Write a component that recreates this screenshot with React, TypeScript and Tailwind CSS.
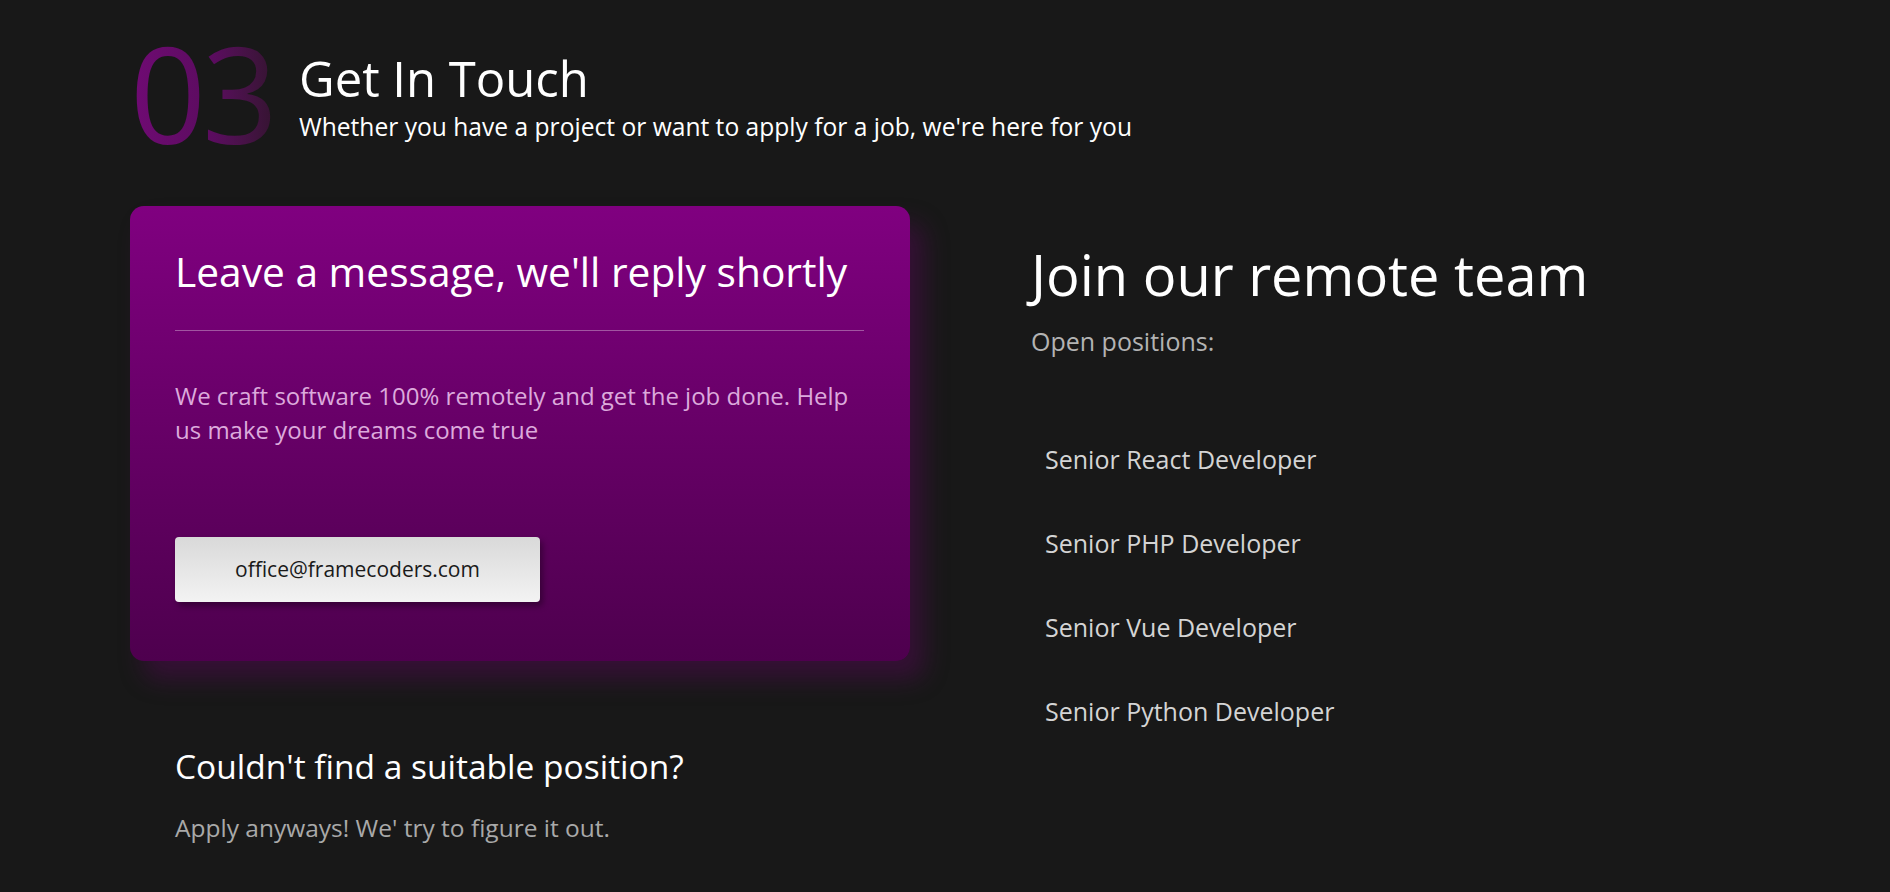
import React from "react";

const positions = [
  "Senior React Developer",
  "Senior PHP Developer",
  "Senior Vue Developer",
  "Senior Python Developer",
];

export default function App() {
  return (
    <div
      className="min-h-[892px] w-full bg-[#181818] text-white"
      style={{ fontFamily: '"Open Sans", "Noto Sans", sans-serif' }}
    >
      <div className="pl-[130px] pt-[26px]">
        {/* Header */}
        <div className="flex items-start">
          <div className="w-[169px] text-[133px] font-normal leading-none tracking-[-4px] bg-gradient-to-r from-[#700a74] via-[#5a0c5e] to-[#26121f] bg-clip-text text-transparent">
            03
          </div>
          <div className="mt-[26px] flex flex-col">
            <h1 className="text-[49px] leading-[52px] font-medium text-white">Get In Touch</h1>
            <p className="mt-[9px] text-[24.6px] leading-[28px] text-white">
              Whether you have a project or want to apply for a job, we're here for you
            </p>
          </div>
        </div>

        {/* Content */}
        <div className="mt-[47px] flex items-start">
          <div className="w-[780px] shrink-0">
            <div className="rounded-[14px] bg-gradient-to-b from-[#800080] to-[#4e004e] px-[45px] pt-[41px] pb-[59px] shadow-[14px_18px_24px_rgba(110,0,110,0.35)]">
              <h2 className="text-[40.7px] leading-[48px] text-white">
                Leave a message, we'll reply shortly
              </h2>
              <div className="mt-[35px] h-px w-[689px] bg-[#a155a1]" />
              <p className="mt-[48px] text-[24px] leading-[34px] text-[#dcaadc]">
                We craft software 100% remotely and get the job done. Help us make your dreams come true
              </p>
              <button className="mt-[90px] flex h-[65px] w-[365px] items-center justify-center rounded-[4px] bg-gradient-to-b from-[#d9d9d9] to-[#f3f3f3] text-[21px] text-[#1a1a1a] shadow-[3px_4px_6px_rgba(0,0,0,0.35)]">
                office@framecoders.com
              </button>
            </div>
            <div className="px-[45px] pt-[85px]">
              <h3 className="text-[33.5px] leading-[40px] text-white">Couldn't find a suitable position?</h3>
              <p className="mt-[27px] text-[24.5px] leading-[30px] text-[#a9a9a9]">
                Apply anyways! We' try to figure it out.
              </p>
            </div>
          </div>

          <div className="ml-[121px] flex flex-col">
            <h2 className="mt-[36px] text-[56px] leading-[64px] font-medium text-white">Join our remote team</h2>
            <p className="mt-[20px] text-[25px] leading-[30px] text-[#b3b3b3]">Open positions:</p>
            <ul className="mt-[88px] flex flex-col gap-[54px] pl-[14px]">
              {positions.map((p) => (
                <li key={p} className="text-[25px] leading-[30px] text-[#d4d4d4]">
                  {p}
                </li>
              ))}
            </ul>
          </div>
        </div>
      </div>
    </div>
  );
}
